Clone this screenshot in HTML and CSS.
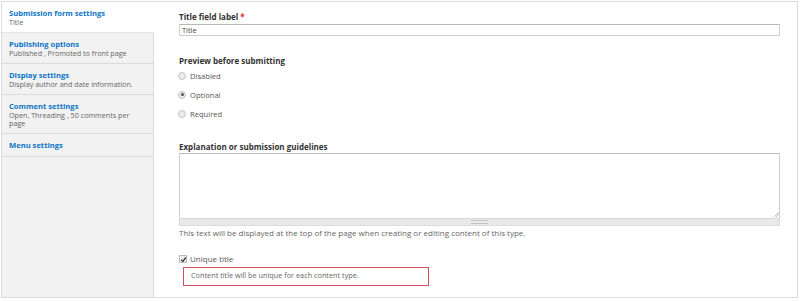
FILE: index.html
```html
<!DOCTYPE html>
<html>
<head>
<meta charset="utf-8">
<link rel="stylesheet" href="styles.css">
</head>
<body>
<div class="panel">
  <div class="sidebar">
    <div class="tab active">
      <div class="tab-title">Submission form settings</div>
      <div class="tab-summary">Title</div>
    </div>
    <div class="tab">
      <div class="tab-title">Publishing options</div>
      <div class="tab-summary">Published , Promoted to front page</div>
    </div>
    <div class="tab">
      <div class="tab-title">Display settings</div>
      <div class="tab-summary">Display author and date information.</div>
    </div>
    <div class="tab">
      <div class="tab-title">Comment settings</div>
      <div class="tab-summary">Open, Threading , 50 comments per page</div>
    </div>
    <div class="tab last">
      <div class="tab-title">Menu settings</div>
    </div>
  </div>
  <div class="main">
    <div class="label">Title field label <span class="req">*</span></div>
    <div class="input">Title</div>

    <div class="label label-preview">Preview before submitting</div>
    <div class="radio-row"><span class="radio"></span><span class="opt">Disabled</span></div>
    <div class="radio-row"><span class="radio checked"></span><span class="opt">Optional</span></div>
    <div class="radio-row"><span class="radio"></span><span class="opt">Required</span></div>

    <div class="label label-expl">Explanation or submission guidelines</div>
    <div class="textarea"><span class="resize"></span></div>
    <div class="grippie"><span class="grip"></span></div>
    <div class="help">This text will be displayed at the top of the page when creating or editing content of this type.</div>

    <div class="check-row">
      <span class="checkbox"><svg width="7" height="7" viewBox="0 0 7 7"><path d="M1.2 3.6 L2.8 5.4 L5.9 1.3" fill="none" stroke="#333" stroke-width="1.3"/></svg></span>
      <span class="opt opt-check">Unique title</span>
    </div>
    <div class="note">Content title will be unique for each content type.</div>
  </div>
</div>
</body>
</html>
```

FILE: styles.css
```css
html, body {
  margin: 0;
  padding: 0;
  background: #fff;
}
body {
  font-family: "Open Sans", "DejaVu Sans", sans-serif;
  color: #333;
}
.panel {
  display: flex;
  margin: 1px 0 0 1px;
  width: 795px;
  height: 295px;
  border: 1px solid #dcdcdc;
}
.sidebar {
  width: 151px;
  flex: none;
  background: #f2f2f2;
  border-right: 1px solid #dcdcdc;
}
.tab {
  padding: 6px 7px 6px 7px;
  border-bottom: 1px solid #dcdcdc;
}
.tab.active {
  background: #fff;
  margin-right: -1px;
  padding-right: 8px;
  border-bottom: 1px solid #e4e4e4;
}
.tab-title {
  font-weight: bold;
  font-size: 7.6px;
  line-height: 10px;
  color: #0a74c4;
}
.tab-summary {
  font-size: 7.2px;
  line-height: 8px;
  color: #666;
}
.main {
  flex: 1;
  padding: 10px 17px 0 25px;
}
.label {
  font-weight: bold;
  font-size: 8px;
  line-height: 10px;
  color: #333;
}
.req {
  color: #e0293a;
}
.input {
  margin-top: 2px;
  height: 10px;
  border: 1px solid #cfcfcf;
  border-top-color: #b8b8b8;
  font-size: 7.4px;
  line-height: 10px;
  padding-left: 2px;
  color: #444;
}
.label-preview {
  margin-top: 20px;
}
.radio-row {
  display: flex;
  align-items: center;
  height: 19px;
}
.radio {
  width: 6px;
  height: 6px;
  border-radius: 50%;
  border: 1px solid #c4c4c4;
  background: #ececec;
  margin-left: -1px;
  margin-right: 4px;
  position: relative;
}
.radio.checked::after {
  content: "";
  position: absolute;
  left: 1.5px;
  top: 1.5px;
  width: 3px;
  height: 3px;
  border-radius: 50%;
  background: #555;
}
.opt {
  font-size: 7.6px;
  color: #555;
  line-height: 10px;
}
.opt-check {
  font-size: 8px;
}
.label-expl {
  margin-top: 19px;
}
.textarea {
  margin-top: 1px;
  height: 64px;
  border: 1px solid #cfcfcf;
  border-top-color: #bdbdbd;
  border-bottom: none;
  position: relative;
}
.resize {
  position: absolute;
  right: 0;
  bottom: 1px;
  width: 5px;
  height: 5px;
  background: linear-gradient(135deg, transparent 45%, #bbb 45%, #bbb 55%, transparent 55%, transparent 70%, #bbb 70%, #bbb 80%, transparent 80%);
}
.grippie {
  height: 6px;
  background: #e9e9e9;
  border: 1px solid #dcdcdc;
  border-top: 1px solid #d6d6d6;
  display: flex;
  justify-content: center;
  align-items: center;
}
.grip {
  width: 17px;
  height: 2px;
  border-top: 1px solid #c4c4c4;
  border-bottom: 1px solid #c4c4c4;
}
.help {
  margin-top: 2px;
  font-size: 8px;
  line-height: 10px;
  color: #666;
}
.check-row {
  display: flex;
  align-items: center;
  margin-top: 16px;
  height: 10px;
}
.checkbox {
  width: 6px;
  height: 6px;
  border: 1px solid #bdbdbd;
  background: #f0f0f0;
  margin-right: 3px;
  display: flex;
  align-items: center;
  justify-content: center;
}
.checkbox svg {
  display: block;
  flex: none;
}
.note {
  margin-top: 3px;
  margin-left: 4px;
  width: 237px;
  height: 17px;
  border: 1px solid #d4505f;
  padding-left: 7px;
  font-size: 7.3px;
  line-height: 14px;
  color: #666;
}
```
